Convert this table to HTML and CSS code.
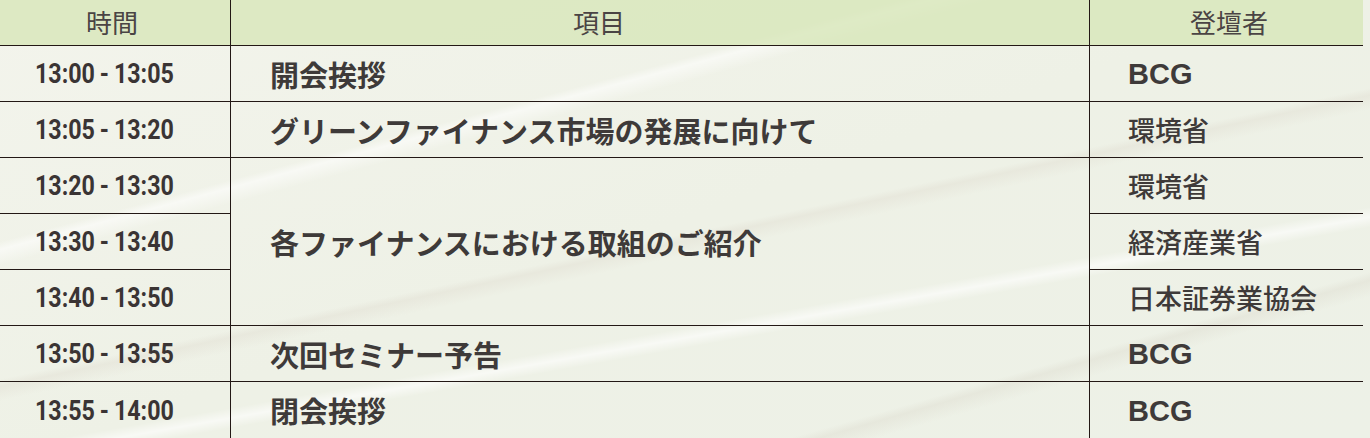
FILE: index.html
```html
<!DOCTYPE html>
<html lang="ja">
<head>
<meta charset="utf-8">
<link rel="stylesheet" href="styles.css">
</head>
<body>
<div class="page">
  <div class="schedule">
    <div class="cell head c-time">時間</div>
    <div class="cell head c-item">項目</div>
    <div class="cell head c-who">登壇者</div>

    <div class="cell time"><span>13:00 - 13:05</span></div>
    <div class="cell item">開会挨拶</div>
    <div class="cell who latin">BCG</div>

    <div class="cell time"><span>13:05 - 13:20</span></div>
    <div class="cell item">グリーンファイナンス市場の発展に向けて</div>
    <div class="cell who">環境省</div>

    <div class="cell time"><span>13:20 - 13:30</span></div>
    <div class="cell item span3">各ファイナンスにおける取組のご紹介</div>
    <div class="cell who">環境省</div>

    <div class="cell time"><span>13:30 - 13:40</span></div>
    <div class="cell who">経済産業省</div>

    <div class="cell time"><span>13:40 - 13:50</span></div>
    <div class="cell who">日本証券業協会</div>

    <div class="cell time"><span>13:50 - 13:55</span></div>
    <div class="cell item">次回セミナー予告</div>
    <div class="cell who latin">BCG</div>

    <div class="cell time last"><span>13:55 - 14:00</span></div>
    <div class="cell item last">閉会挨拶</div>
    <div class="cell who latin last">BCG</div>
  </div>
</div>
</body>
</html>
```

FILE: styles.css
```css
html, body {
  margin: 0;
  padding: 0;
}
body {
  width: 1370px;
  height: 438px;
  overflow: hidden;
  background-color: #f0f2e8;
  background-image:
    linear-gradient(165deg, transparent 0 30%, rgba(255,255,255,0.55) 31%, transparent 33% 100%),
    linear-gradient(168deg, transparent 0 52%, rgba(225,222,210,0.45) 53%, transparent 55% 100%),
    linear-gradient(170deg, transparent 0 66%, rgba(255,255,255,0.6) 67.5%, transparent 69% 100%),
    linear-gradient(164deg, transparent 0 80%, rgba(220,218,205,0.4) 81%, transparent 83% 100%),
    linear-gradient(160deg, #f3f4ec 0%, #eef1e6 50%, #edf1e7 100%);
  font-family: "Noto Sans CJK JP", "Noto Sans", sans-serif;
  color: #3e3a39;
}
.page {
  width: 1363px;
}
.schedule {
  display: grid;
  grid-template-columns: 230px 859px 274px;
  grid-template-rows: 46px repeat(7, 56px);
}
.cell {
  box-sizing: border-box;
  display: flex;
  align-items: center;
  border-bottom: 1.5px solid #231815;
}
.cell.last {
  border-bottom: none;
}
.head {
  background: rgba(214, 230, 182, 0.75);
  font-size: 26px;
  font-weight: 400;
  padding-bottom: 2px;
  color: #4a4444;
}
.c-time {
  padding-left: 86px;
}
.c-item {
  padding-left: 342px;
  border-left: 1.5px solid #231815;
}
.c-who {
  padding-left: 100px;
  border-left: 1.5px solid #231815;
}
.time {
  padding-left: 35px;
  font-family: Roboto, "Liberation Sans", sans-serif;
  font-weight: 700;
  font-size: 28px;
  color: #3a3434;
}
.time span {
  display: inline-block;
  white-space: nowrap;
  word-spacing: -1px;
  transform: scaleX(0.83);
  transform-origin: left center;
}
.item {
  border-left: 1.5px solid #231815;
  padding-left: 39px;
  font-size: 29px;
  font-weight: 700;
  color: #3e3a39;
}
.span3 {
  grid-row: span 3;
}
.who {
  border-left: 1.5px solid #231815;
  padding-left: 38px;
  font-size: 27px;
  font-weight: 500;
}
.who.latin {
  font-family: "Liberation Sans", Arial, sans-serif;
  font-weight: 700;
  font-size: 29px;
  padding-top: 2px;
}
```
